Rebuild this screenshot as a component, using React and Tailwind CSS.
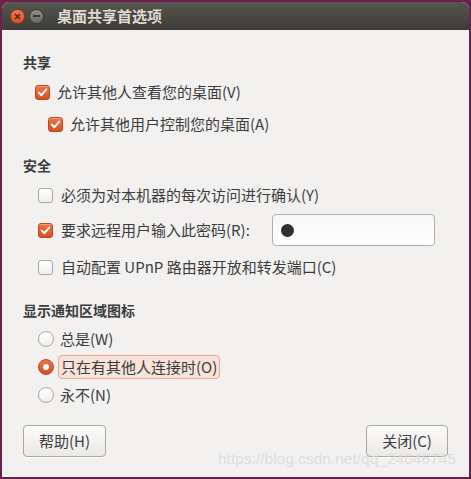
import React from "react";

const font = { fontFamily: '"Noto Sans CJK SC", "Open Sans", sans-serif' };

function CheckBox({ checked }) {
  if (checked) {
    return (
      <span className="flex h-[15px] w-[15px] shrink-0 items-center justify-center rounded-[3px] border border-[#b9471f] bg-gradient-to-b from-[#f07446] to-[#d5501f] shadow-[inset_0_1px_0_rgba(255,255,255,0.3)]">
        <svg width="11" height="11" viewBox="0 0 11 11">
          <path d="M1.8 5.6 L4.4 8.2 L9.2 2.6" fill="none" stroke="#fff" strokeWidth="2" strokeLinecap="round" strokeLinejoin="round" />
        </svg>
      </span>
    );
  }
  return (
    <span className="h-[15px] w-[15px] shrink-0 rounded-[3px] border border-[#a9a6a2] bg-gradient-to-b from-white to-[#eeedeb]" />
  );
}

function Radio({ checked }) {
  if (checked) {
    return (
      <span className="flex h-[16px] w-[16px] shrink-0 items-center justify-center rounded-full border border-[#b9471f] bg-gradient-to-b from-[#f07446] to-[#d5501f]">
        <span className="h-[6px] w-[6px] rounded-full bg-white" />
      </span>
    );
  }
  return (
    <span className="h-[16px] w-[16px] shrink-0 rounded-full border border-[#a9a6a2] bg-gradient-to-b from-white to-[#eeedeb]" />
  );
}

export default function App() {
  return (
    <div className="relative h-[479px] w-[471px] bg-[#6b2050] p-[2px]" style={font}>
      <div className="flex h-full flex-col overflow-hidden rounded-t-[7px] bg-[#f2f1f0]">
        {/* Title bar */}
        <div className="flex h-[28px] shrink-0 items-center bg-gradient-to-b from-[#56554f] to-[#3d3c38] pl-[8px]">
          <span className="flex h-[15px] w-[15px] items-center justify-center rounded-full bg-gradient-to-b from-[#f47a4d] to-[#d9501f] border border-[#8e3a1c]">
            <svg width="7" height="7" viewBox="0 0 7 7">
              <path d="M1 1 L6 6 M6 1 L1 6" stroke="#3a2218" strokeWidth="1.3" />
            </svg>
          </span>
          <span className="ml-[4px] flex h-[15px] w-[15px] items-center justify-center rounded-full bg-gradient-to-b from-[#8d8c86] to-[#6b6a65] border border-[#3a3935]">
            <span className="h-[1.5px] w-[7px] bg-[#3a3935]" />
          </span>
          <span className="ml-[13px] text-[15px] font-bold text-[#dfdbd2]">桌面共享首选项</span>
        </div>

        <div className="flex flex-1 flex-col pl-[21px] pr-[34px] text-[15px] text-[#3c3c3c]">
          <div className="mt-[22px] flex h-[20px] items-center text-[14px] font-bold">共享</div>
          <div className="mt-[10px] flex h-[20px] items-center gap-[7px] pl-[12px]">
            <CheckBox checked />
            <span>允许其他人查看您的桌面(V)</span>
          </div>
          <div className="mt-[12px] flex h-[20px] items-center gap-[7px] pl-[25px]">
            <CheckBox checked />
            <span>允许其他用户控制您的桌面(A)</span>
          </div>

          <div className="mt-[21px] flex h-[20px] items-center text-[14px] font-bold">安全</div>
          <div className="mt-[10px] flex h-[20px] items-center gap-[8px] pl-[15px]">
            <CheckBox />
            <span>必须为对本机器的每次访问进行确认(Y)</span>
          </div>
          <div className="mt-[9px] flex h-[32px] items-center pl-[15px]">
            <CheckBox checked />
            <span className="ml-[8px]">要求远程用户输入此密码(R):</span>
            <div className="ml-auto flex h-[32px] w-[163px] items-center rounded-[4px] border border-[#b3b0ab] bg-gradient-to-b from-[#f7f7f7] to-white pl-[8px]">
              <span className="h-[13px] w-[13px] rounded-full bg-[#2f2f2f]" />
            </div>
          </div>
          <div className="mt-[11px] flex h-[20px] items-center gap-[8px] pl-[15px]">
            <CheckBox />
            <span>自动配置 UPnP 路由器开放和转发端口(C)</span>
          </div>

          <div className="mt-[23px] flex h-[20px] items-center text-[14px] font-bold">显示通知区域图标</div>
          <div className="mt-[9px] flex h-[20px] items-center gap-[6px] pl-[15px]">
            <Radio />
            <span>总是(W)</span>
          </div>
          <div className="mt-[6px] flex h-[24px] items-center gap-[4px] pl-[15px]">
            <Radio checked />
            <span className="flex h-[24px] items-center rounded-[4px] border border-[#f2a488] bg-[#f8e3da] px-[2px]">只在有其他人连接时(O)</span>
          </div>
          <div className="mt-[6px] flex h-[20px] items-center gap-[6px] pl-[15px]">
            <Radio />
            <span>永不(N)</span>
          </div>

          <div className="mt-[20px] flex items-center justify-between">
            <button className="flex h-[32px] w-[83px] items-center justify-center rounded-[4px] border border-[#aaa6a1] bg-gradient-to-b from-[#fbfbfa] to-[#ebe9e6] text-[15px] text-[#3c3c3c] shadow-[0_1px_0_rgba(255,255,255,0.8)]">
              帮助(H)
            </button>
            <button className="mr-[-13px] flex h-[32px] w-[82px] items-center justify-center rounded-[4px] border border-[#aaa6a1] bg-gradient-to-b from-[#fbfbfa] to-[#ebe9e6] text-[15px] text-[#3c3c3c] shadow-[0_1px_0_rgba(255,255,255,0.8)]">
              关闭(C)
            </button>
          </div>
        </div>
      </div>
      <span
        className="absolute left-[218px] top-[447px] text-[15.5px] text-[#d8d8d8]/80"
        style={{ fontFamily: '"Liberation Sans", Arial, sans-serif' }}
      >
        https://blog.csdn.net/qq_24046745
      </span>
    </div>
  );
}
